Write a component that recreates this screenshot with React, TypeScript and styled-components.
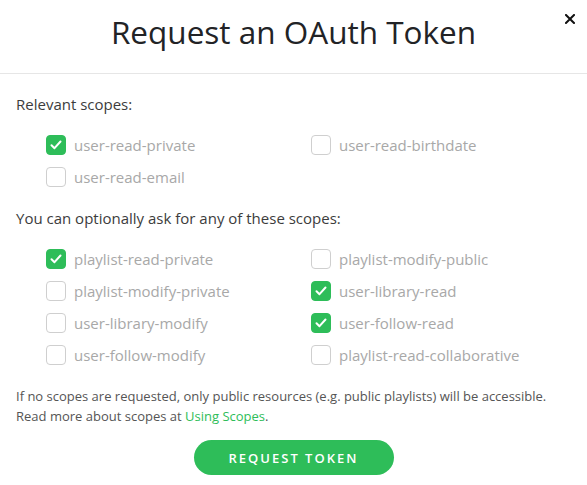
import React from "react";
import styled, { createGlobalStyle } from "styled-components";

const Global = createGlobalStyle`
  html, body { margin: 0; padding: 0; background: #ffffff; }
  body { font-family: "Open Sans", "Liberation Sans", sans-serif; -webkit-font-smoothing: antialiased; }
  * { box-sizing: border-box; }
`;

const Modal = styled.div`
  width: 587px;
  background: #ffffff;
`;

const Header = styled.header`
  position: relative;
  height: 74px;
  border-bottom: 1px solid #e6e6e6;
  display: flex;
  align-items: center;
  justify-content: center;
  padding-bottom: 11px;
`;

const Title = styled.h1`
  margin: 0;
  font-size: 31.5px;
  font-weight: 400;
  color: #222326;
`;

const Close = styled.button`
  position: absolute;
  top: 12px;
  right: 10px;
  width: 14px;
  height: 14px;
  padding: 0;
  border: none;
  background: transparent;
  display: flex;
  align-items: center;
  justify-content: center;
`;

const Body = styled.div`
  padding: 20px 16px 0;
`;

const SectionLabel = styled.p`
  margin: 0 0 21px;
  font-size: 15px;
  line-height: 20px;
  color: #3c3c3c;
`;

const ScopeGrid = styled.div`
  display: grid;
  grid-template-columns: 265px 265px;
  row-gap: 12px;
  padding-left: 30px;
  margin-bottom: 21px;
`;

const Scope = styled.label`
  display: flex;
  align-items: center;
  gap: 8px;
  height: 20px;
  font-size: 15px;
  color: #a8a8a8;
`;

const Box = styled.span<{ $checked: boolean }>`
  width: 20px;
  height: 20px;
  border-radius: 4px;
  flex: none;
  display: flex;
  align-items: center;
  justify-content: center;
  background: ${(p) => (p.$checked ? "#2ebd59" : "#ffffff")};
  border: 1px solid ${(p) => (p.$checked ? "#2ebd59" : "#cfcfcf")};
`;

const Note = styled.p`
  margin: 0 0 14px;
  font-size: 13px;
  line-height: 20px;
  color: #555555;
`;

const Link = styled.a`
  color: #2ebd59;
  text-decoration: none;
`;

const Actions = styled.div`
  display: flex;
  justify-content: center;
`;

const PrimaryButton = styled.button`
  width: 200px;
  height: 35px;
  border: none;
  border-radius: 18px;
  background: #2ebd59;
  color: #ffffff;
  font-family: inherit;
  font-size: 13px;
  font-weight: 600;
  letter-spacing: 2px;
  text-transform: uppercase;
`;

const Check = () => (
  <svg width="12" height="10" viewBox="0 0 12 10">
    <path d="M1.5 5.2 L4.5 8.2 L10.5 1.5" fill="none" stroke="#fff" strokeWidth="2" strokeLinecap="round" strokeLinejoin="round" />
  </svg>
);

type Item = { name: string; checked: boolean };

const relevant: Item[] = [
  { name: "user-read-private", checked: true },
  { name: "user-read-birthdate", checked: false },
  { name: "user-read-email", checked: false },
];

const optional: Item[] = [
  { name: "playlist-read-private", checked: true },
  { name: "playlist-modify-public", checked: false },
  { name: "playlist-modify-private", checked: false },
  { name: "user-library-read", checked: true },
  { name: "user-library-modify", checked: false },
  { name: "user-follow-read", checked: true },
  { name: "user-follow-modify", checked: false },
  { name: "playlist-read-collaborative", checked: false },
];

const Scopes = ({ items }: { items: Item[] }) => (
  <ScopeGrid>
    {items.map((it) => (
      <Scope key={it.name}>
        <Box $checked={it.checked}>{it.checked && <Check />}</Box>
        {it.name}
      </Scope>
    ))}
  </ScopeGrid>
);

export default function App() {
  return (
    <Modal>
      <Global />
      <Header>
        <Title>Request an OAuth Token</Title>
        <Close aria-label="Close">
          <svg width="10" height="10" viewBox="0 0 10 10">
            <path d="M1 1 L9 9 M9 1 L1 9" stroke="#111" strokeWidth="2" strokeLinecap="square" />
          </svg>
        </Close>
      </Header>
      <Body>
        <SectionLabel>Relevant scopes:</SectionLabel>
        <Scopes items={relevant} />
        <SectionLabel>You can optionally ask for any of these scopes:</SectionLabel>
        <Scopes items={optional} />
        <Note>
          If no scopes are requested, only public resources (e.g. public playlists) will be accessible.
          <br />
          Read more about scopes at <Link href="#">Using Scopes</Link>.
        </Note>
        <Actions>
          <PrimaryButton>Request Token</PrimaryButton>
        </Actions>
      </Body>
    </Modal>
  );
}
